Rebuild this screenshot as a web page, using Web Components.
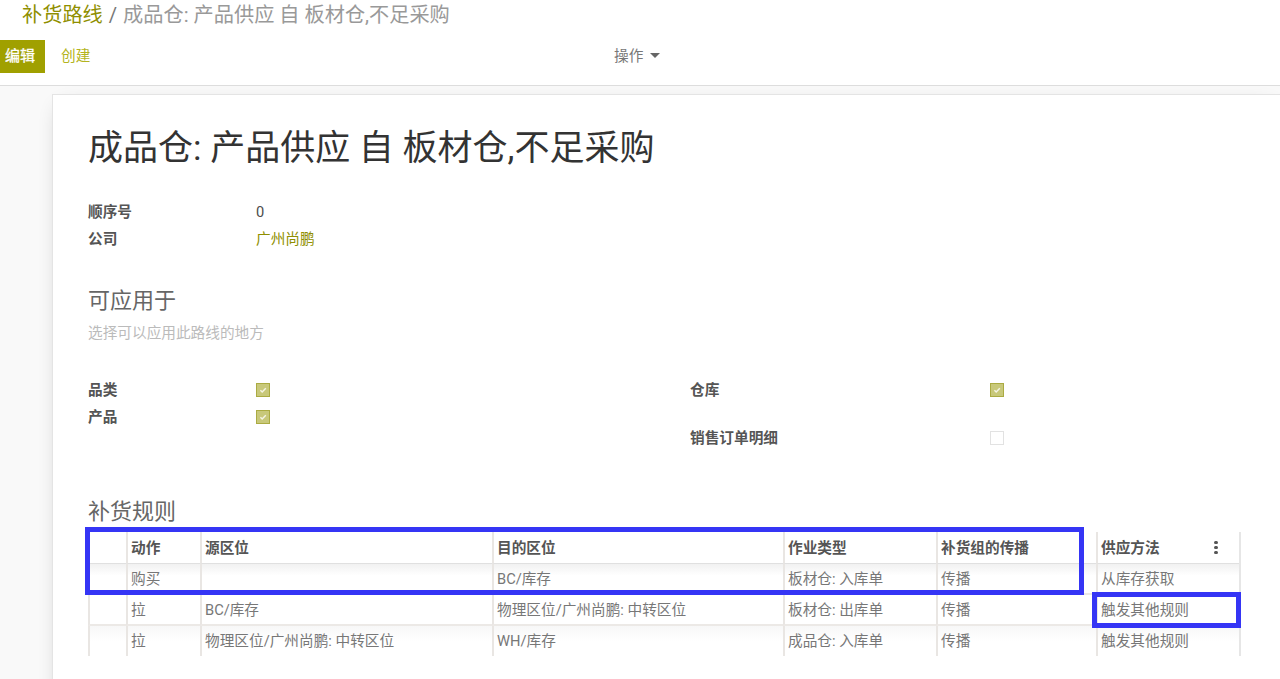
<!DOCTYPE html>
<html lang="zh"><head><meta charset="utf-8"><title>补货路线</title>
<style>
html,body{margin:0;height:679px;overflow:hidden;background:#f9f9f9;font:14.67px/20px Roboto,"Noto Sans CJK SC",sans-serif;color:#4c4c4c}
</style></head><body>
<x-control-panel></x-control-panel>
<x-content>
<x-sheet>
  <x-title>成品仓: 产品供应 自 板材仓,不足采购</x-title>
  <x-info></x-info>
  <x-section></x-section>
  <x-rules></x-rules>
</x-sheet>
</x-content>
<script>
function def(name,html,init){customElements.define(name,class extends HTMLElement{constructor(){super();this.attachShadow({mode:'open'}).innerHTML=html;}connectedCallback(){if(init)init(this)}})}
def('x-control-panel',`<style>
:host{display:block;height:85px;background:#fff;border-bottom:1px solid #ddd}
.bc{height:40px;padding:0 0 0 22px;font-size:20.2px;line-height:30px;color:#999;white-space:nowrap}
.bc a{color:#8f8f00}.bc i{font-style:normal;color:#777;padding:0 6px}
.row{display:grid;grid-template-columns:640px 1fr;height:33px}
.btns{display:flex;align-items:center}
.edit{width:45px;height:33px;padding:0 0 2px 5px;box-sizing:border-box;background:#a0a000;color:#fff;display:flex;align-items:center;font-size:15px;-webkit-text-stroke:.3px #fff}
.new{margin-left:16px;color:#b4b420;padding-bottom:2px}
.act{display:flex;align-items:center;margin-left:-26px;color:#777;gap:7px;padding-bottom:2px}
.caret{width:0;height:0;border:5px solid transparent;border-top-color:#666;border-bottom:0}
</style>
<div class="bc"><a>补货路线</a><i>/</i>成品仓: 产品供应 自 板材仓,不足采购</div>
<div class="row"><div class="btns"><span class="edit">编辑</span><span class="new">创建</span></div>
<div class="act"><span>操作</span><span class="caret"></span></div></div>`);
def('x-content',`<style>:host{display:block;padding:8px 0 0 52px}</style><slot></slot>`);
def('x-sheet',`<style>:host{display:block;background:#fff;border:1px solid #e4e4e4;border-right:0;box-shadow:0 5px 20px -10px rgba(0,0,0,.3);height:640px;padding:0 38px 0 35px;box-sizing:border-box;position:relative}</style><slot></slot>`);
def('x-title',`<style>:host{display:block;padding-top:28px;height:60px;font-size:35px;line-height:52px;color:#333;white-space:nowrap}</style><slot></slot>`);
def('x-field',`<style>:host{display:grid;grid-template-columns:168px 1fr;height:27px;align-items:center}
.l{font-weight:700;color:#555}</style><span class="l"><slot name="label"></slot></span><span><slot></slot></span>`);
def('x-check',`<style>:host{display:inline-block;width:14px;height:14px;box-sizing:border-box;vertical-align:middle;margin-top:-2px;background:#fff;border:1px solid #e2e2e2}
:host([on]){background:#c8c87a;border-color:#abab42}svg{display:block;width:12px;height:12px}</style><svg viewBox="0 0 12 12"><path d="M3.4 6.2 5.2 8 8.8 4.2" fill="none" stroke="#f4f4e4" stroke-width="1.5"/></svg>`,
 el=>{if(!el.hasAttribute('on'))el.shadowRoot.querySelector('svg').style.display='none'});
def('x-info',`<style>:host{display:block;padding-top:15px}a{color:#8f8f00}</style>
<x-field><span slot="label">顺序号</span>0</x-field><x-field><span slot="label">公司</span><a>广州尚鹏</a></x-field>`);
def('x-section',`<style>:host{display:block;padding-top:34px}
h2{margin:0;font-weight:400;font-size:22px;line-height:30px;color:#666}
p{margin:7px 0 0;color:#bbb;line-height:20px}
.grid{display:grid;grid-template-columns:602px 1fr;margin-top:33px}
.sp{height:21px}</style>
<h2>可应用于</h2><p>选择可以应用此路线的地方</p>
<div class="grid"><div>
<x-field><span slot="label">品类</span><x-check on></x-check></x-field>
<x-field><span slot="label">产品</span><x-check on></x-check></x-field>
</div><div>
<x-field style="grid-template-columns:300px 1fr"><span slot="label">仓库</span><x-check on></x-check></x-field>
<div class="sp"></div>
<x-field style="grid-template-columns:300px 1fr"><span slot="label">销售订单明细</span><x-check></x-check></x-field>
</div></div>`);
const rows=[['购买','','BC/库存','板材仓: 入库单','传播','从库存获取'],['拉','BC/库存','物理区位/广州尚鹏: 中转区位','板材仓: 出库单','传播','触发其他规则'],['拉','物理区位/广州尚鹏: 中转区位','WH/库存','成品仓: 入库单','传播','触发其他规则']];
def('x-rules',`<style>:host{display:block;position:relative;margin-top:46px;width:1153px}
h2{margin:0;font-weight:400;font-size:22px;line-height:30px;color:#666;padding-bottom:5px}
.t{display:grid;width:max-content;grid-template-columns:38px 74px 292px 291px 153px 160px 143px;grid-template-rows:32px 31px 31px 30px;border-right:2px solid #e6e6e6;background:#fff}
.c{border-left:2px solid #e9e6e3;padding:0 3px;display:flex;align-items:center;justify-content:space-between;white-space:nowrap;color:#777;box-sizing:border-box;min-width:0;border-bottom:2px solid #ece9e6}
.h{font-weight:700;color:#555;border-bottom:1px solid #e0e0e0}
.r0{background:linear-gradient(#f1f1f1,#fff 40%)}
.r2{background:linear-gradient(#f7f7f7,#fff 50%);border-bottom:0}
.mark{position:absolute;border:5px solid #3535f5;box-sizing:border-box;pointer-events:none}
.dots{display:grid;gap:2px;margin-right:18px}.dots b{width:4px;height:3px;border-radius:2px;background:#555;display:block}
</style><h2>补货规则</h2><div class="t" id="t"></div>
<div class="mark" style="left:-3px;top:30px;width:999px;height:68px"></div>
<div class="mark" style="left:1004px;top:95px;width:149px;height:36px"></div>`,
el=>{const t=el.shadowRoot.getElementById('t');if(t.children.length)return;
const hd=['','动作','源区位','目的区位','作业类型','补货组的传播','供应方法'];
let s=hd.map((x,i)=>`<div class="c h">${x}${i==6?'<span class="dots"><b></b><b></b><b></b></span>':''}</div>`).join('');
rows.forEach((r,k)=>{s+=['',...r].map(x=>`<div class="c r${k}">${x}</div>`).join('')});t.innerHTML=s;});
</script>
</body></html>
